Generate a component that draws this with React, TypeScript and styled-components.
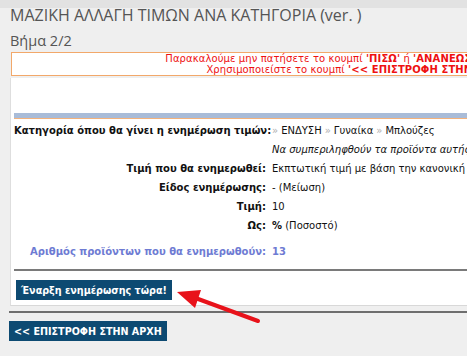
import styled, { createGlobalStyle } from 'styled-components';

const GlobalStyle = createGlobalStyle`
  html, body {
    margin: 0;
    padding: 0;
    background: #efefef;
    overflow: hidden;
  }
`

const Page = styled('div')`
  position: relative;
  width: 706px;
  font-family: "DejaVu Sans", Verdana, sans-serif;
`

const TopStrip = styled('div')`
  height: 8px;
  background: #e2e2e2;
`

const Title = styled('h1')`
  margin: 0;
  padding: 0 0 0 10px;
  font-family: "Open Sans", sans-serif;
  font-weight: normal;
  font-size: 16px;
  line-height: 14px;
  color: #555;
`

const Step = styled('h2')`
  margin: 0;
  padding: 10px 0 0 10px;
  font-family: "Open Sans", sans-serif;
  font-weight: normal;
  font-size: 14.5px;
  line-height: 18px;
  color: #555;
`

const Warning = styled('div')`
  margin: 2px 0 0 11px;
  border: 1px solid #f2a86a;
  background: #fff;
  padding: 0;
  text-align: center;
  font-size: 10px;
  letter-spacing: 0.1px;
  line-height: 11px;
  color: #ee1111;
  b { font-weight: bold; }
`

const Panel = styled('div')`
  margin: 2px 0 0 10px;
  padding: 35px 0 5px 3px;
  background: #fff;
  border-left: 1px solid #dedede;
  border-bottom: 1px solid #d8d8d8;
`

const HeadBar = styled('div')`
  height: 5px;
  background: #a9bcd8;
  border-bottom: 1px solid #f3b27c;
`

const Rows = styled('div')`
  display: grid;
  grid-template-columns: 252px 1fr;
  column-gap: 6px;
  padding-top: 2px;
`

const Label = styled('div')<{ $accent?: boolean }>`
  text-align: right;
  font-weight: bold;
  font-size: 10px;
  line-height: 19px;
  color: ${p => (p.$accent ? '#6e7bd3' : '#111')};
  white-space: nowrap;
  padding-top: ${p => (p.$accent ? '7px' : '0')};
`

const Value = styled('div')<{ $accent?: boolean; $italic?: boolean }>`
  font-size: 10px;
  line-height: 19px;
  white-space: nowrap;
  color: ${p => (p.$accent ? '#6e7bd3' : '#111')};
  font-weight: ${p => (p.$accent ? 'bold' : 'normal')};
  font-style: ${p => (p.$italic ? 'italic' : 'normal')};
  padding-top: ${p => (p.$accent ? '7px' : '0')};
  b { font-weight: bold; }
`

const Sep = styled('span')<{ $first?: boolean }>`
  color: #b0b0b0;
  margin: ${p => (p.$first ? '0 3px 0 0' : '0 3px')};
`

const DarkLine = styled('div')`
  height: 2px;
  background: #7a7a7a;
  margin-top: 8px;
`

const BlueButton = styled('button')`
  display: block;
  border: none;
  background: #0d4a72;
  color: #fff;
  font-family: "DejaVu Sans", Verdana, sans-serif;
  font-weight: bold;
  font-size: 9.6px;
  height: 20px;
  padding: 0 5px;
  cursor: pointer;
`

const StartButton = styled(BlueButton)`
  margin: 9px 0 0 2px;
`

const BackLine = styled('div')`
  margin: 5px 0 0 9px;
  height: 2px;
  background: #6e6e6e;
`

const BackButton = styled(BlueButton)`
  margin: 8px 0 0 9px;
`

const Arrow = styled('svg')`
  position: absolute;
  left: 170px;
  top: 284px;
`

export default function App() {
  return (
    <>
      <GlobalStyle />
      <Page>
        <TopStrip />
        <Title>ΜΑΖΙΚΗ ΑΛΛΑΓΗ ΤΙΜΩΝ ΑΝΑ ΚΑΤΗΓΟΡΙΑ (ver. )</Title>
        <Step>Βήμα 2/2</Step>
        <Warning>
          Παρακαλούμε μην πατήσετε το κουμπί <b>'ΠΙΣΩ'</b> ή <b>'ΑΝΑΝΕΩΣΗ'</b> της σελίδας.<br />
          Χρησιμοποιείστε το κουμπί <b>'&lt;&lt; ΕΠΙΣΤΡΟΦΗ ΣΤΗΝ ΑΡΧΗ'</b>
        </Warning>

        <Panel>
          <HeadBar />
          <Rows>
            <Label>Κατηγορία όπου θα γίνει η ενημέρωση τιμών:</Label>
            <Value>
              <Sep $first>»</Sep>ΕΝΔΥΣΗ<Sep>»</Sep>Γυναίκα<Sep>»</Sep>Μπλούζες
            </Value>
            <Label />
            <Value $italic>Να συμπεριληφθούν τα προϊόντα αυτής της κατηγορίας</Value>
            <Label>Τιμή που θα ενημερωθεί:</Label>
            <Value>Εκπτωτική τιμή με βάση την κανονική τιμή</Value>
            <Label>Είδος ενημέρωσης:</Label>
            <Value>- (Μείωση)</Value>
            <Label>Τιμή:</Label>
            <Value>10</Value>
            <Label>Ως:</Label>
            <Value><b>%</b> (Ποσοστό)</Value>
            <Label $accent>Αριθμός προϊόντων που θα ενημερωθούν:</Label>
            <Value $accent>13</Value>
          </Rows>
          <DarkLine />
          <StartButton>Έναρξη ενημέρωσης τώρα!</StartButton>
        </Panel>

        <BackLine />
        <BackButton>&lt;&lt; ΕΠΙΣΤΡΟΦΗ ΣΤΗΝ ΑΡΧΗ</BackButton>

        <Arrow width="100" height="50" viewBox="0 0 100 50">
          <line x1="88" y1="37" x2="20" y2="12" stroke="#e8121a" strokeWidth="4" strokeLinecap="round" />
          <polygon points="7,8 31,6 25,24" fill="#e8121a" />
        </Arrow>
      </Page>
    </>
  )
}
